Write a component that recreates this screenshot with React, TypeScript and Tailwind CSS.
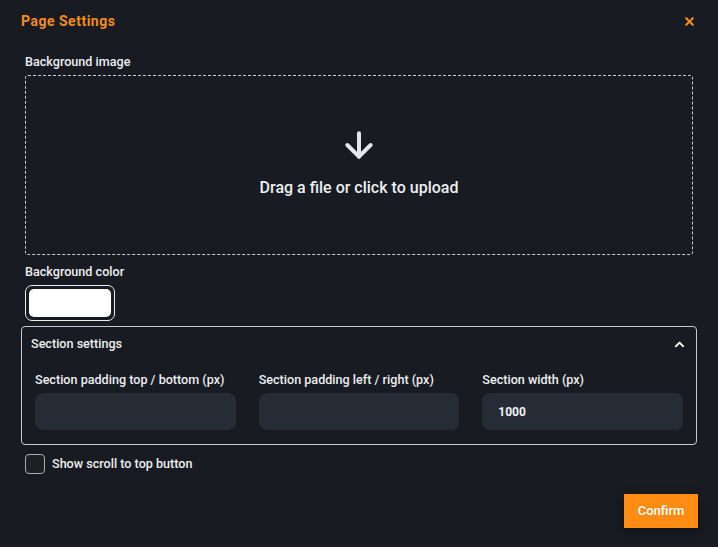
import { ArrowDown, ChevronUp, X } from "lucide-react";

// 섹션 입력 필드 정의
const SECTION_FIELDS = [
  { label: "Section padding top / bottom (px)", value: "" },
  { label: "Section padding left / right (px)", value: "" },
  { label: "Section width (px)", value: "1000" },
];

export default function App() {
  return (
    <div
      className="min-h-[547px] w-full bg-[#181b21] text-white"
      style={{ fontFamily: "Roboto, 'Liberation Sans', sans-serif" }}
    >
      <div className="flex items-center justify-between pl-[21px] pr-[22px] pt-[12px]">
        <h1 className="text-[14px] font-bold leading-[18px] tracking-[0.5px] text-[#f28c1e]">
          Page Settings
        </h1>
        <X className="h-[13px] w-[13px] text-[#f28c1e]" strokeWidth={4} />
      </div>

      <div className="px-[21px] pt-[25px]">
        <div className="px-[4px]">
          <p className="text-[12.6px] font-medium leading-[14px] text-[#eceef1]">
            Background image
          </p>
          <div className="mt-[6px] flex h-[180px] flex-col items-center rounded-[3px] border border-dashed border-[#c9ccd2] pt-[49px]">
            <ArrowDown className="h-[40px] w-[40px] text-[#e4e6ea]" strokeWidth={2.4} />
            <p className="mt-[14px] text-[16px] font-medium leading-[18px] text-[#eceef1]">
              Drag a file or click to upload
            </p>
          </div>

          <p className="mt-[10px] text-[12.6px] font-medium leading-[14px] text-[#eceef1]">
            Background color
          </p>
          <div className="mt-[6px] h-[36px] w-[90px] rounded-[7px] border border-[#e9eaec] p-[3px]">
            <div className="h-full w-full rounded-[5px] bg-white" />
          </div>
        </div>

        <div className="mt-[5px] rounded-[4px] border border-[#c6c9cf] px-[9px] pb-[14px] pt-[9px]">
          <div className="flex items-center justify-between">
            <p className="text-[12.6px] font-medium leading-[16px] text-[#eceef1]">
              Section settings
            </p>
            <ChevronUp className="h-[15px] w-[15px] text-white" strokeWidth={3} />
          </div>
          <div className="mt-[21px] grid grid-cols-3 gap-[23px] px-[4px]">
            {SECTION_FIELDS.map((f) => (
              <div key={f.label}>
                <p className="text-[12.6px] font-medium leading-[14px] text-[#eceef1]">
                  {f.label}
                </p>
                <div className="mt-[6px] flex h-[37px] items-center rounded-[8px] bg-[#262c35] px-[16px] text-[12px] font-bold text-[#f2f3f5]">
                  {f.value}
                </div>
              </div>
            ))}
          </div>
        </div>

        <div className="mt-[9px] flex items-center gap-[7px] px-[4px]">
          <div className="h-[20px] w-[20px] rounded-[4px] border border-[#a7abb2] bg-[#1e1f22]" />
          <p className="text-[12.6px] font-medium leading-[14px] text-[#eceef1]">
            Show scroll to top button
          </p>
        </div>

        <div className="mt-[20px] flex justify-end">
          <button className="-mr-[1px] h-[34px] w-[74px] bg-[#ff8c12] text-[13px] font-medium text-white shadow-[0_4px_12px_rgba(0,0,0,0.35)]">
            Confirm
          </button>
        </div>
      </div>
    </div>
  );
}
